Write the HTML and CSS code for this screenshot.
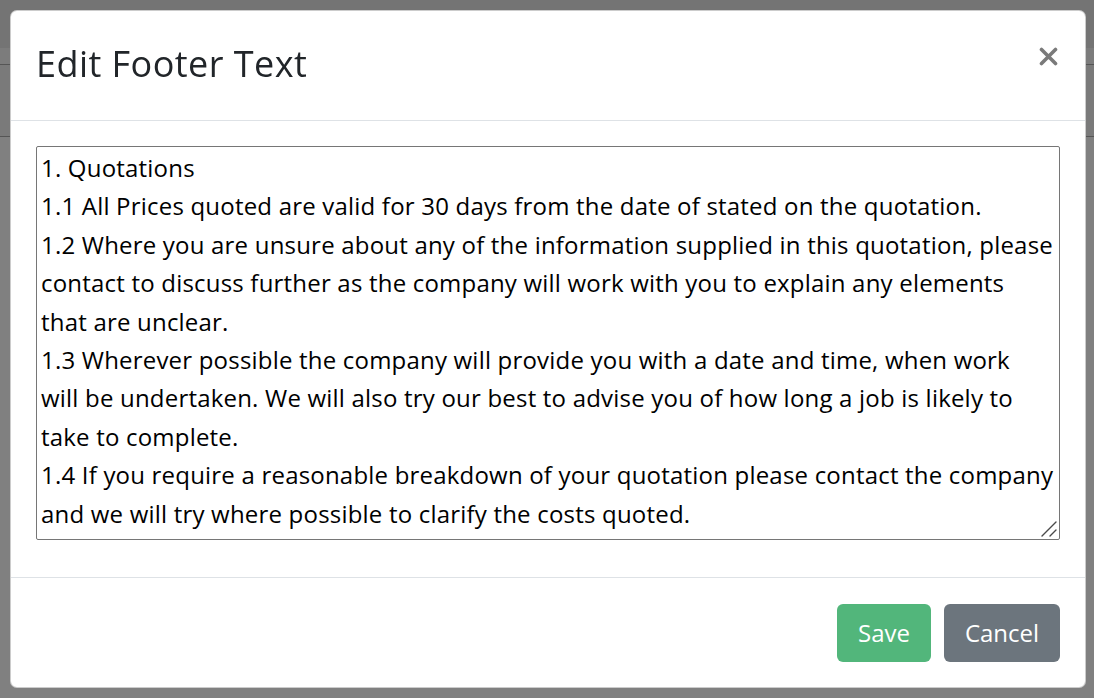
FILE: index.html
```html
<!DOCTYPE html>
<html lang="en">
<head>
    <meta charset="UTF-8">
    <meta name="viewport" content="width=device-width, initial-scale=1.0">
    <title>Edit Footer Text</title>
    <link rel="stylesheet" href="styles.css">
</head>
<body>
    <div class="page">
        <div class="topbar"></div>
        <div class="subbar"></div>
        <div class="panel"></div>
    </div>

    <div class="backdrop">
        <div class="modal">
            <div class="modal-header">
                <h4 class="modal-title">Edit Footer Text</h4>
                <button class="close" aria-label="Close">
                    <svg width="19" height="19" viewBox="0 0 19 19">
                        <path d="M2.5 2.5 L16.5 16.5 M16.5 2.5 L2.5 16.5" stroke="#7a7a7a" stroke-width="3.6" stroke-linecap="round"/>
                    </svg>
                </button>
            </div>
            <div class="modal-body">
                <div class="text-wrap">
                    <textarea class="footer-text" id="footerText">1. Quotations
1.1 All Prices quoted are valid for 30 days from the date of stated on the quotation.
1.2 Where you are unsure about any of the information supplied in this quotation, please contact to discuss further as the company will work with you to explain any elements that are unclear.
1.3 Wherever possible the company will provide you with a date and time, when work will&nbsp;be undertaken. We will also try our best to advise you of how long a job is likely to take to complete.
1.4 If you require a reasonable breakdown of your quotation please contact the company and we will try where possible to clarify the costs quoted.</textarea>
                    <svg class="grip" width="16" height="16" viewBox="0 0 16 16">
                        <path d="M1 15 L15 1 M9 15 L15 9" stroke="#4a4a4a" stroke-width="1.4" stroke-linecap="round"/>
                    </svg>
                </div>
            </div>
            <div class="modal-footer">
                <button class="btn btn-save">Save</button>
                <button class="btn btn-cancel">Cancel</button>
            </div>
        </div>
    </div>
</body>
</html>
```

FILE: styles.css
```css
body {
    margin: 0;
    background: #808080;
    font-family: "Open Sans", "Noto Sans", sans-serif;
    color: #212529;
}

/* page behind the overlay */
.page { height: 698px; overflow: hidden; }
.topbar { height: 48px; background: #747474; }
.subbar { height: 16px; background: #7c7c7c; border-bottom: 1px solid #555; }
.panel { height: 71px; background: #7a7a7a; border-bottom: 1px solid #555; }

.backdrop {
    position: fixed;
    inset: 0;
    padding: 10px 8px 10px 10px;
    box-sizing: border-box;
}

.modal {
    height: 678px;
    box-sizing: border-box;
    background: #fff;
    border: 1px solid rgba(0, 0, 0, 0.2);
    border-radius: 7px;
    display: flex;
    flex-direction: column;
}

.modal-header {
    height: 110px;
    box-sizing: border-box;
    padding: 0 26px 0 25px;
    border-bottom: 1px solid #dee2e6;
    display: flex;
    justify-content: space-between;
    align-items: center;
}
.modal-title {
    margin: 0;
    font-size: 36px;
    font-weight: 400;
    line-height: 1.2;
    letter-spacing: 0.45px;
    color: #212529;
    padding-bottom: 4px;
}
.close {
    background: none;
    border: none;
    padding: 0;
    margin: -19px 1px 0 0;
    cursor: pointer;
    display: flex;
}

.modal-body {
    height: 456px;
    box-sizing: border-box;
    padding: 25px 25px 0 25px;
}
.text-wrap { position: relative; }
.footer-text {
    display: block;
    width: 100%;
    height: 394px;
    box-sizing: border-box;
    margin: 0;
    padding: 2px 3px 2px 4px;
    border: 1px solid #767676;
    border-radius: 2px;
    font-family: "Open Sans", "Noto Sans", sans-serif;
    font-size: 24px;
    line-height: 38.4px;
    letter-spacing: 0.2px;
    color: #000;
    resize: none;
    overflow: hidden;
}
.grip {
    position: absolute;
    right: 3px;
    bottom: 3px;
    pointer-events: none;
}

.modal-footer {
    flex: 1;
    padding: 0 25px;
    border-top: 1px solid #dee2e6;
    display: flex;
    justify-content: flex-end;
    align-items: center;
    gap: 13px;
}
.btn {
    height: 58px;
    padding: 0;
    border: none;
    border-radius: 6px;
    font-family: "Open Sans", "Noto Sans", sans-serif;
    font-size: 24px;
    color: #fff;
    cursor: pointer;
}
.btn-save { background: #52b67b; width: 94px; }
.btn-cancel { background: #6c757d; width: 116px; }
```
